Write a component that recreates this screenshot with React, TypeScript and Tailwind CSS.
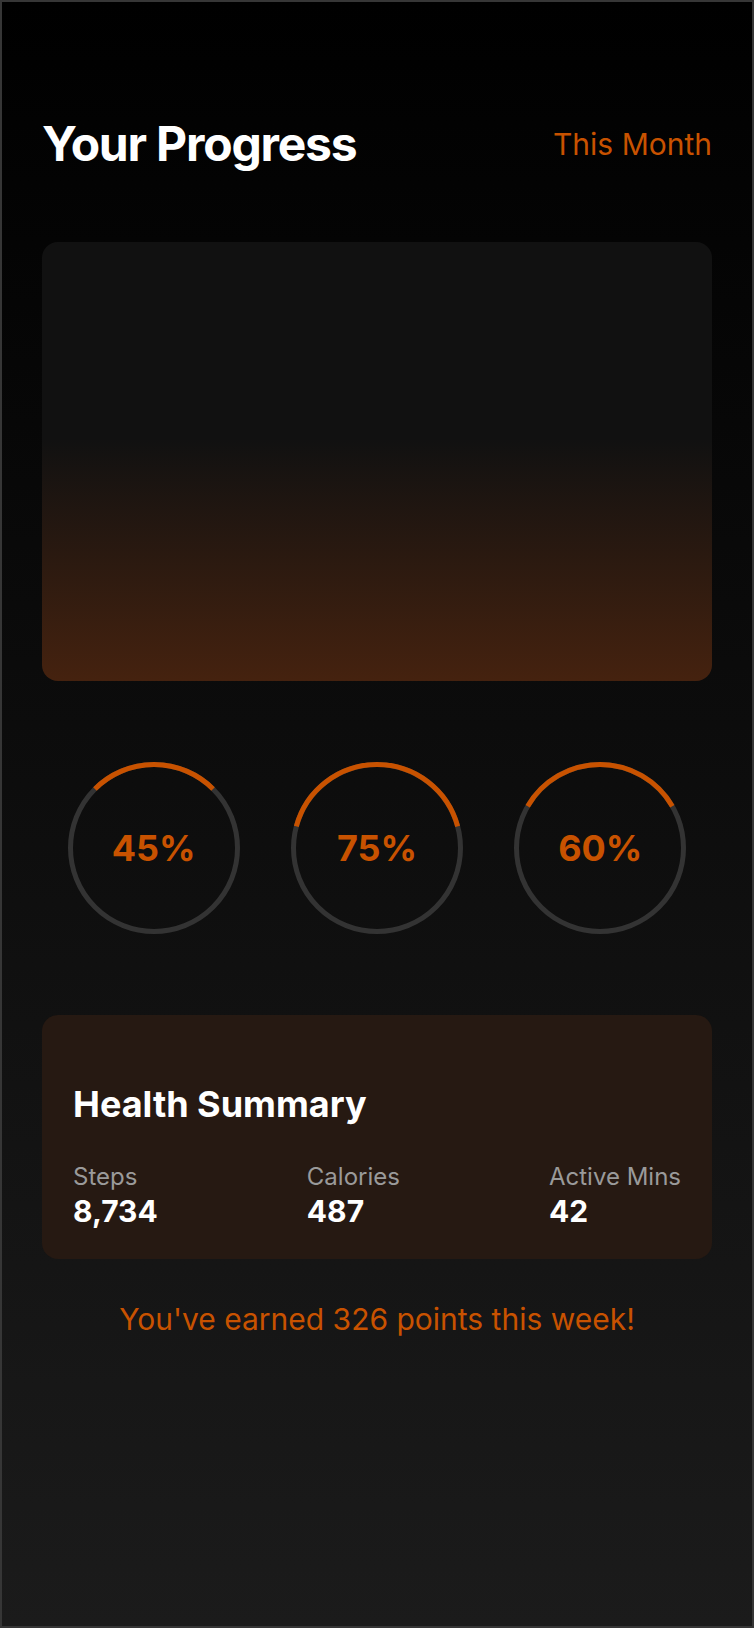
import React from 'react';

const ORANGE = '#c85200';

interface RingProps {
  value: number;
}

// progress ring: orange arc is centred on the top of the circle
const Ring: React.FC<RingProps> = ({ value }) => {
  const size = 172;
  const stroke = 5;
  const r = (size - stroke) / 2;
  const c = size / 2;
  const half = (value * Math.PI) / 180;
  const x1 = c - r * Math.sin(half);
  const x2 = c + r * Math.sin(half);
  const y = c - r * Math.cos(half);
  const large = value > 90 ? 1 : 0;

  return (
    <div className="relative w-[172px] h-[172px] flex items-center justify-center">
      <svg width={size} height={size} className="absolute inset-0">
        <circle cx={c} cy={c} r={r} fill="none" stroke="#333333" strokeWidth={stroke} />
        <path
          d={`M ${x1} ${y} A ${r} ${r} 0 ${large} 1 ${x2} ${y}`}
          fill="none"
          stroke={ORANGE}
          strokeWidth={stroke}
        />
      </svg>
      <span className="relative text-4xl font-bold text-[#c85200]">{value}%</span>
    </div>
  );
};

const stats = [
  { label: 'Steps', value: '8,734' },
  { label: 'Calories', value: '487' },
  { label: 'Active Mins', value: '42' },
];

export default function App() {
  return (
    <div
      className="min-h-screen w-full border-2 border-[#363636] bg-[linear-gradient(to_bottom,#000000,#1b1b1b)] px-10 pt-[118px] pb-10"
      style={{ fontFamily: 'Inter, "Noto Sans", sans-serif' }}
    >
      {/* header */}
      <div className="flex items-center justify-between mb-[74px]">
        <h1 className="text-5xl font-bold tracking-tight text-white">Your Progress</h1>
        <span className="text-3xl text-[#c85200]">This Month</span>
      </div>

      {/* chart card */}
      <div className="h-[439px] rounded-2xl bg-[linear-gradient(to_bottom,#111111_0%,#111111_45%,#45220f_100%)]" />

      {/* rings */}
      <div className="flex justify-around mt-[81px]">
        <Ring value={45} />
        <Ring value={75} />
        <Ring value={60} />
      </div>

      {/* health summary */}
      <div className="mt-[81px] rounded-2xl bg-[#261912] px-[31px] pt-[69px] pb-[30px]">
        <h2 className="text-4xl font-bold text-white mb-[37px]">Health Summary</h2>
        <div className="flex justify-between">
          {stats.map((s) => (
            <div key={s.label} className="flex flex-col">
              <span className="text-2xl text-[#9a9a9a]">{s.label}</span>
              <span className="text-3xl font-bold text-white">{s.value}</span>
            </div>
          ))}
        </div>
      </div>

      <p className="mt-[42px] text-center text-3xl text-[#c85200]">
        You've earned 326 points this week!
      </p>
    </div>
  );
}
